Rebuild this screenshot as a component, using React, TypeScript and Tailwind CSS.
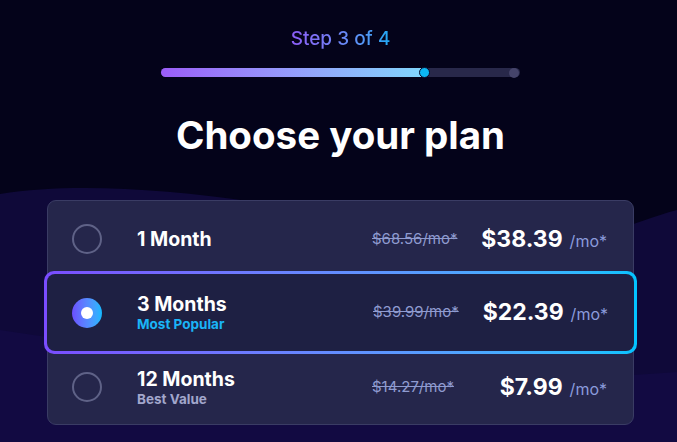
import React from 'react';

interface Plan {
  id: string;
  title: string;
  tag?: string;
  tagClass?: string;
  oldPrice: string;
  price: string;
}

const plans: Plan[] = [
  { id: '1m', title: '1 Month', oldPrice: '$68.56/mo*', price: '$38.39' },
  {
    id: '3m',
    title: '3 Months',
    tag: 'Most Popular',
    tagClass: 'text-[#1ab4f7]',
    oldPrice: '$39.99/mo*',
    price: '$22.39',
  },
  {
    id: '12m',
    title: '12 Months',
    tag: 'Best Value',
    tagClass: 'text-[#a2a6cc]',
    oldPrice: '$14.27/mo*',
    price: '$7.99',
  },
];

const Radio: React.FC<{ checked: boolean }> = ({ checked }) =>
  checked ? (
    <div className="flex h-[30px] w-[30px] shrink-0 items-center justify-center rounded-full bg-gradient-to-r from-[#6b4dff] to-[#0cb9ff]">
      <div className="h-[12px] w-[12px] rounded-full bg-white" />
    </div>
  ) : (
    <div className="h-[30px] w-[30px] shrink-0 rounded-full border-2 border-[#5f6287]" />
  );

const PlanRow: React.FC<{ plan: Plan; selected: boolean }> = ({ plan, selected }) => (
  <div className="flex h-full items-center pl-[24px] pr-[26px]">
    <Radio checked={selected} />
    <div className="ml-[35px] flex flex-col">
      <span className="text-[19.5px] font-bold leading-[23px] text-white">{plan.title}</span>
      {plan.tag && (
        <span className={`text-[13.5px] font-bold leading-[16px] ${plan.tagClass}`}>{plan.tag}</span>
      )}
    </div>
    <div className="ml-auto flex w-[235px] items-center justify-between">
      <span className="text-[15px] text-[#8f9bd0] line-through">{plan.oldPrice}</span>
      <span className="flex items-baseline">
        <span className="text-[23px] font-bold text-white">{plan.price}</span>
        <span className="ml-[7px] text-[16px] text-[#8b9bdc]">/mo*</span>
      </span>
    </div>
  </div>
);

export default function App() {
  return (
    <div
      className="relative h-[442px] w-[677px] overflow-hidden bg-[#04031a]"
      style={{ fontFamily: 'Inter, "Noto Sans", sans-serif' }}
    >
      <svg className="absolute inset-0" width="677" height="442" viewBox="0 0 677 442">
        <path d="M0 194 C 120 175, 300 205, 460 240 C 560 262, 620 225, 677 210 L677 442 L0 442 Z" fill="#0f0939" />
        <path d="M0 330 C 200 360, 450 390, 677 372 L677 442 L0 442 Z" fill="#120a42" />
      </svg>

      <div className="relative flex flex-col items-center pl-[4px]">
        <div className="mt-[26px] bg-gradient-to-r from-[#8b5cf6] to-[#18a8f5] bg-clip-text text-[19px] font-medium leading-[26px] text-transparent">
          Step 3 of 4
        </div>

        <div className="relative mt-[16px] h-[9px] w-[359px] rounded-full bg-[#28284a]">
          <div className="h-full w-[264px] rounded-full bg-gradient-to-r from-[#9b5cf8] to-[#80d6fc]" />
          <div className="absolute left-[258px] top-[-1px] h-[11px] w-[11px] rounded-full border border-[#0b0c2a] bg-[#0cb8f4]" />
          <div className="absolute right-[1px] top-[-0.5px] h-[10px] w-[10px] rounded-full bg-[#45446a]" />
        </div>

        <h1 className="mt-[35px] text-[38.5px] font-bold leading-[46px] text-white">Choose your plan</h1>

        <div className="mt-[42px] flex w-[587px] flex-col rounded-[9px] border border-[#3a3c64] bg-[#25264b]">
          <div className="h-[70px] pt-[6px]">
            <PlanRow plan={plans[0]} selected={false} />
          </div>
          <div className="-mx-[4px] h-[83px] rounded-[10px] bg-gradient-to-r from-[#7a4cff] to-[#00c3ff] p-[3px]">
            <div className="h-full rounded-[8px] bg-[#1e2043] pl-[1px]">
              <PlanRow plan={plans[1]} selected />
            </div>
          </div>
          <div className="h-[70px] pb-[4px]">
            <PlanRow plan={plans[2]} selected={false} />
          </div>
        </div>
      </div>
    </div>
  );
}
